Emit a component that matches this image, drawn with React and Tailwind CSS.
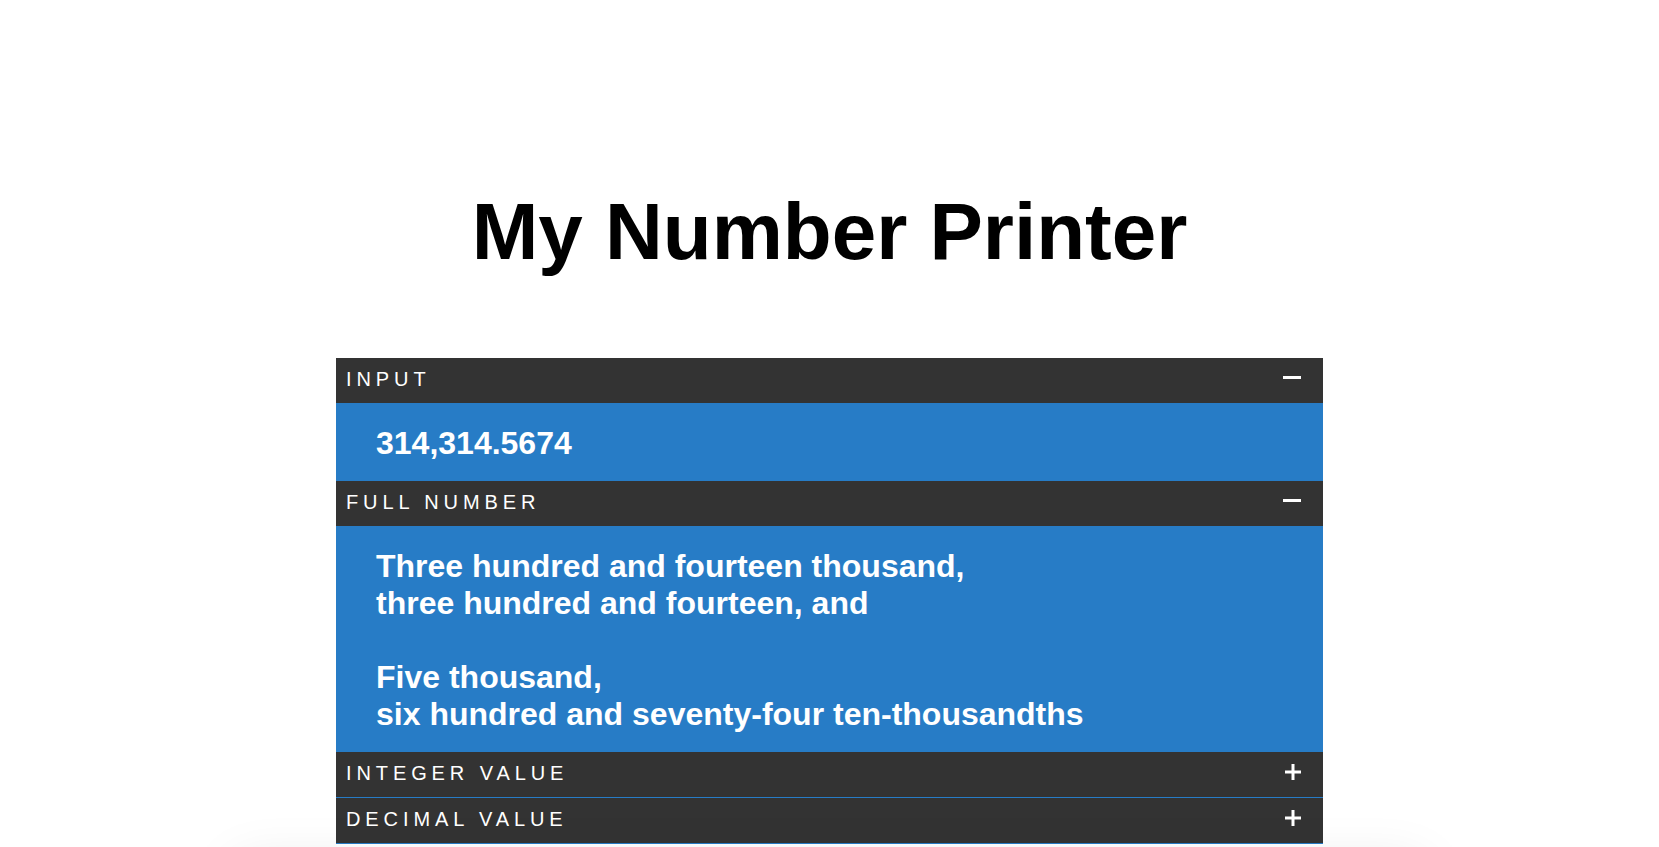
import React from "react";

function Minus() {
  return (
    <svg width="18" height="18" viewBox="0 0 18 18" className="mt-[11px] shrink-0">
      <rect x="0" y="7" width="18" height="3" fill="#ffffff" />
    </svg>
  );
}

function Plus() {
  return (
    <svg width="18" height="18" viewBox="0 0 18 18" className="mt-[11px] shrink-0">
      <rect x="8.5" y="1" width="3" height="16" fill="#ffffff" />
      <rect x="2" y="7.5" width="16" height="3" fill="#ffffff" />
    </svg>
  );
}

function Header({ title, open }) {
  return (
    <div className="flex h-[46px] items-start justify-between border-b border-[#277cc6] bg-[#333333] pl-[10px] pr-[22px]">
      <span className="pt-[10px] text-[20px] leading-[23px] tracking-[0.245em] text-white">
        {title}
      </span>
      {open ? <Minus /> : <Plus />}
    </div>
  );
}

export default function App() {
  return (
    <div
      className="min-h-screen bg-white pt-[186px]"
      style={{ fontFamily: '"Liberation Sans", Arial, sans-serif' }}
    >
      <h1 className="text-center text-[80px] font-bold leading-[92px] text-black">
        My Number Printer
      </h1>
      <div className="mx-auto mt-[80px] w-[987px]">
        <Header title="INPUT" open />
        <div className="bg-[#277cc6] pl-10 pt-[21px] pb-[19px] text-[32px] font-bold leading-[37px] text-white">
          314,314.5674
        </div>
        <Header title="FULL NUMBER" open />
        <div className="bg-[#277cc6] pl-10 pt-[21px] pb-[19px] text-[32px] font-bold leading-[37px] text-white">
          <p>Three hundred and fourteen thousand,</p>
          <p>three hundred and fourteen, and</p>
          <p>&nbsp;</p>
          <p>Five thousand,</p>
          <p>six hundred and seventy-four ten-thousandths</p>
        </div>
        <Header title="INTEGER VALUE" />
        <Header title="DECIMAL VALUE" />
        <div className="mx-[-100px] mt-[20px] h-[200px] bg-white shadow-[0_0_50px_rgba(0,0,0,0.1)]" />
      </div>
    </div>
  );
}
